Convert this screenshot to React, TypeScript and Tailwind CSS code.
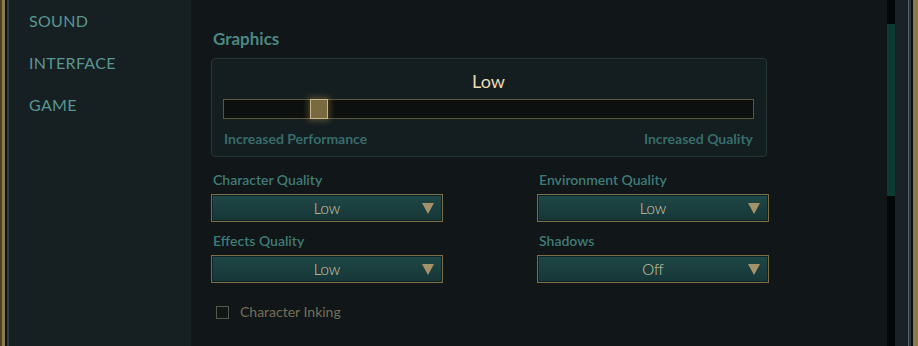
import React from 'react';

const font = { fontFamily: 'Lato, "Open Sans", sans-serif' };

const Dropdown = ({ label, value }: { label: string; value: string }) => (
    <div className="flex flex-col">
        <span className="pl-[2px] text-[14px] leading-[18px] font-semibold text-[#3f7c77]">{label}</span>
        <div className="mt-[5px] relative h-[28px] border border-[#7a6d47] bg-gradient-to-b from-[#1f4747] to-[#163636] flex items-center justify-center shadow-[inset_0_0_0_1px_#0e2526]">
            <span className="text-[15px] font-light text-[#d3c9a8]">{value}</span>
            <svg className="absolute right-[8px] top-[8px]" width="12" height="11" viewBox="0 0 12 11">
                <polygon points="0,0 12,0 6,11" fill="#a4936a" />
            </svg>
        </div>
    </div>
);

export default function App() {
    return (
        <div className="flex h-[346px] w-[918px] bg-[#111619] overflow-hidden" style={font}>
            {/* left frame */}
            <div className="flex h-full shrink-0">
                <div className="w-[2px] bg-[#4a4127]" />
                <div className="w-[3px] bg-[#8a7b48]" />
                <div className="w-[2px] bg-[#0b0f0f]" />
                <div className="w-[2px] bg-[#31403f]" />
            </div>

            {/* sidebar */}
            <nav className="w-[182px] shrink-0 bg-[#162023] pl-[20px] flex flex-col gap-[20px] pt-[10px]">
                {['SOUND', 'INTERFACE', 'GAME'].map((item) => (
                    <span key={item} className="text-[16px] leading-[22px] text-[#5a958f] tracking-[0.3px]">{item}</span>
                ))}
            </nav>

            {/* main */}
            <main className="flex-1 pl-[20px] pt-[27px]">
                <div className="w-[558px]">
                    <h2 className="pl-[2px] text-[17px] leading-[24px] font-bold text-[#4b8882]">Graphics</h2>

                    <div className="mt-[7px] mr-[2px] h-[99px] rounded-[4px] border border-[#263836] bg-[#141d20] pl-[11px] pr-[12px] pt-[10px]">
                        <div className="text-center text-[18px] leading-[24px] text-[#e7dbb4]">Low</div>
                        <div className="mt-[6px] relative h-[20px] border border-[#5c573b] bg-[#0c100e]">
                            <div className="absolute left-[86px] top-[-1px] h-[20px] w-[18px] border border-[#c7b688] bg-[#7a6a3f] shadow-[0_0_6px_2px_rgba(190,160,90,0.35)]" />
                        </div>
                        <div className="mt-[10px] flex justify-between text-[14px] leading-[20px] font-bold text-[#376c69] px-[1px]">
                            <span>Increased Performance</span>
                            <span>Increased Quality</span>
                        </div>
                    </div>

                    <div className="mt-[14px] grid grid-cols-[232px_232px] justify-between gap-y-[10px]">
                        <Dropdown label="Character Quality" value="Low" />
                        <Dropdown label="Environment Quality" value="Low" />
                        <Dropdown label="Effects Quality" value="Low" />
                        <Dropdown label="Shadows" value="Off" />
                    </div>

                    <label className="mt-[19px] ml-[5px] flex items-center gap-[11px]">
                        <span className="h-[13px] w-[13px] border border-[#545a4a]" />
                        <span className="text-[14px] leading-[20px] text-[#756f57]">Character Inking</span>
                    </label>
                </div>
            </main>

            {/* scrollbar */}
            <div className="w-[8px] shrink-0 bg-[#040707] pt-[24px]">
                <div className="h-[172px] bg-[#0d3a33]" />
            </div>

            {/* right frame */}
            <div className="flex h-full shrink-0">
                <div className="w-[13px] bg-[#1a2225]" />
                <div className="w-[1px] bg-[#57636a]" />
                <div className="w-[2px] bg-[#2a3539]" />
                <div className="w-[2px] bg-[#0c1010]" />
                <div className="w-[5px] bg-[#8b7b4d]" />
            </div>
        </div>
    );
}
